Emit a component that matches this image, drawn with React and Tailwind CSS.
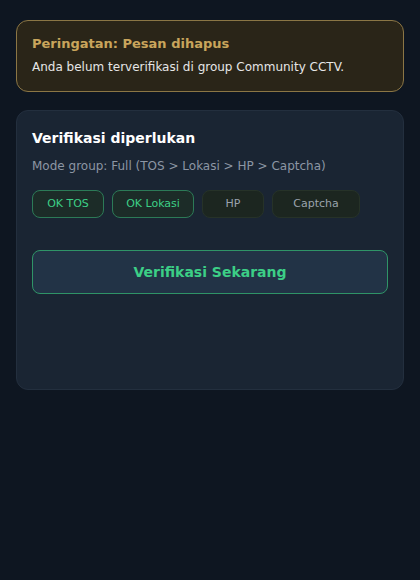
const steps = [
  { label: 'OK TOS', done: true, w: 'w-[72px]' },
  { label: 'OK Lokasi', done: true, w: 'w-[82px]' },
  { label: 'HP', done: false, w: 'w-[62px]' },
  { label: 'Captcha', done: false, w: 'w-[88px]' },
]

export default function App() {
  return (
    <div className="min-h-[580px] bg-[#0e1621] px-4 pt-5 font-['DejaVu_Sans',sans-serif]">
      {/* Warning */}
      <div className="h-[72px] rounded-xl border border-[#8b7645] bg-[#2a2518] px-[15px] pt-[14px]">
        <p className="text-[13px] font-bold leading-[18px] text-[#c9a55c]">Peringatan: Pesan dihapus</p>
        <p className="mt-[5px] text-[12px] leading-[18px] text-[#e6e6e6]">Anda belum terverifikasi di group Community CCTV.</p>
      </div>

      {/* Card */}
      <div className="mt-[18px] h-[280px] rounded-xl border border-[#232f3e] bg-[#1a2533] px-[15px] pt-[17px]">
        <h2 className="text-[14px] font-bold leading-5 text-white">Verifikasi diperlukan</h2>
        <p className="mt-[9px] text-[12px] leading-[18px] text-[#8c96a4]">Mode group: Full (TOS &gt; Lokasi &gt; HP &gt; Captcha)</p>
        <div className="mt-[15px] flex gap-2">
          {steps.map(s => (
            <div
              key={s.label}
              className={`flex h-7 items-center justify-center rounded-lg border text-[11px] ${s.w} ${
                s.done
                  ? 'border-[#2c7a57] bg-[#1c2c28] text-[#3ccf86]'
                  : 'border-[#263228] bg-[#1c2620] text-[#9aa3ad]'
              }`}
            >
              {s.label}
            </div>
          ))}
        </div>
        <button className="mt-8 flex h-11 w-full items-center justify-center rounded-lg border border-[#2f9467] bg-[#223346] text-[14px] font-bold text-[#3ccf86]">
          Verifikasi Sekarang
        </button>
      </div>
    </div>
  )
}
